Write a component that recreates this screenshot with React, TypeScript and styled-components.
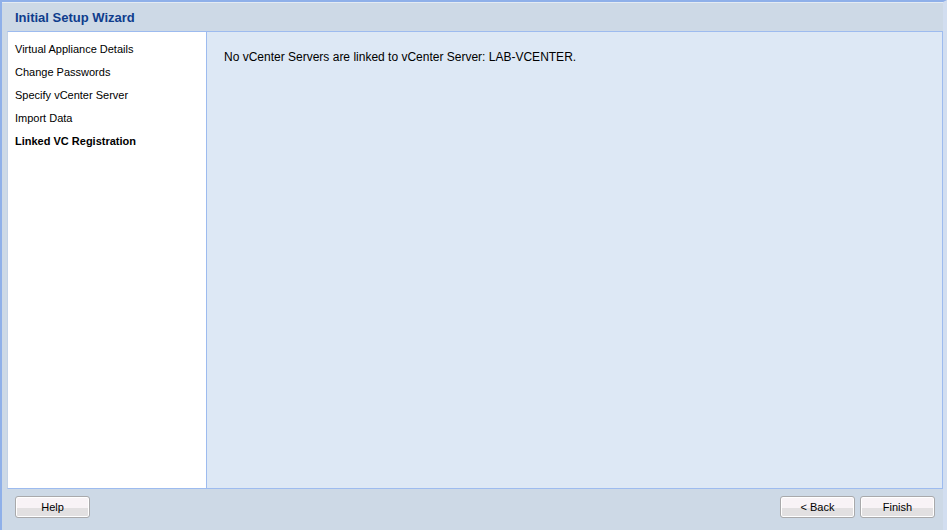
import * as React from 'react';
import styled, { createGlobalStyle } from 'styled-components';

const GlobalStyle = createGlobalStyle`
    html, body {
        margin: 0;
        padding: 0;
        background: #cdd9e6;
    }
`;

const WizardWindow = styled.div`
    width: 947px;
    height: 530px;
    box-sizing: border-box;
    display: flex;
    flex-direction: column;
    background: #cdd9e6;
    border-left: 2px solid #8fb0e9;
    border-top: 2px solid #8fb0e9;
    border-right: 4px solid #d2def0;
    font-family: 'Liberation Sans', Arial, sans-serif;
`;

const TitleBar = styled.div`
    height: 29px;
    display: flex;
    align-items: center;
    padding-left: 13px;
    font-size: 13px;
    font-weight: bold;
    color: #0f3d8d;
    border-top: 1px solid #e4ebf3;
    box-sizing: border-box;
`;

const Body = styled.div`
    height: 458px;
    margin-left: 5px;
    display: flex;
    box-sizing: border-box;
    border: 1px solid #9dbbef;
    border-left-color: #c3d2e6;
`;

const StepList = styled.ul`
    width: 199px;
    margin: 0;
    padding: 6px 0 0 7px;
    box-sizing: border-box;
    list-style: none;
    background: #ffffff;
    border-right: 1px solid #9dbbef;
`;

const Step = styled.li<{ $current?: boolean }>`
    height: 23px;
    line-height: 23px;
    font-size: 11px;
    color: #000000;
    font-weight: ${(p) => (p.$current ? 'bold' : 'normal')};
`;

const Content = styled.div`
    flex: 1;
    background: #dde8f5;
    padding: 18px 0 0 17px;
    font-size: 12px;
    color: #000000;
`;

const Footer = styled.div`
    flex: 1;
    display: flex;
    align-items: flex-start;
    padding: 7px 8px 0 13px;
`;

const Spacer = styled.div`
    flex: 1;
`;

const Button = styled.button`
    width: 75px;
    height: 22px;
    margin-left: 5px;
    padding: 0;
    font-family: 'Liberation Sans', Arial, sans-serif;
    font-size: 11px;
    color: #000000;
    border: 1px solid #a9a9ab;
    border-radius: 3px;
    background: linear-gradient(to bottom, #f8f3f6 0%, #f8f3f6 55%, #e2e0e1 55%, #e2e0e1 100%);
    box-shadow: inset 0 0 0 1px #ffffff;
    cursor: pointer;

    &:first-child {
        margin-left: 0;
    }
`;

const steps = [
    'Virtual Appliance Details',
    'Change Passwords',
    'Specify vCenter Server',
    'Import Data',
    'Linked VC Registration',
];

function App(): React.ReactElement {
    return (
        <>
            <GlobalStyle />
            <WizardWindow>
                <TitleBar>Initial Setup Wizard</TitleBar>
                <Body>
                    <StepList>
                        {steps.map((s, i) => (
                            <Step key={s} $current={i === steps.length - 1}>
                                {s}
                            </Step>
                        ))}
                    </StepList>
                    <Content>No vCenter Servers are linked to vCenter Server: LAB-VCENTER.</Content>
                </Body>
                <Footer>
                    <Button>Help</Button>
                    <Spacer />
                    <Button>&lt; Back</Button>
                    <Button>Finish</Button>
                </Footer>
            </WizardWindow>
        </>
    );
}

export default App;
